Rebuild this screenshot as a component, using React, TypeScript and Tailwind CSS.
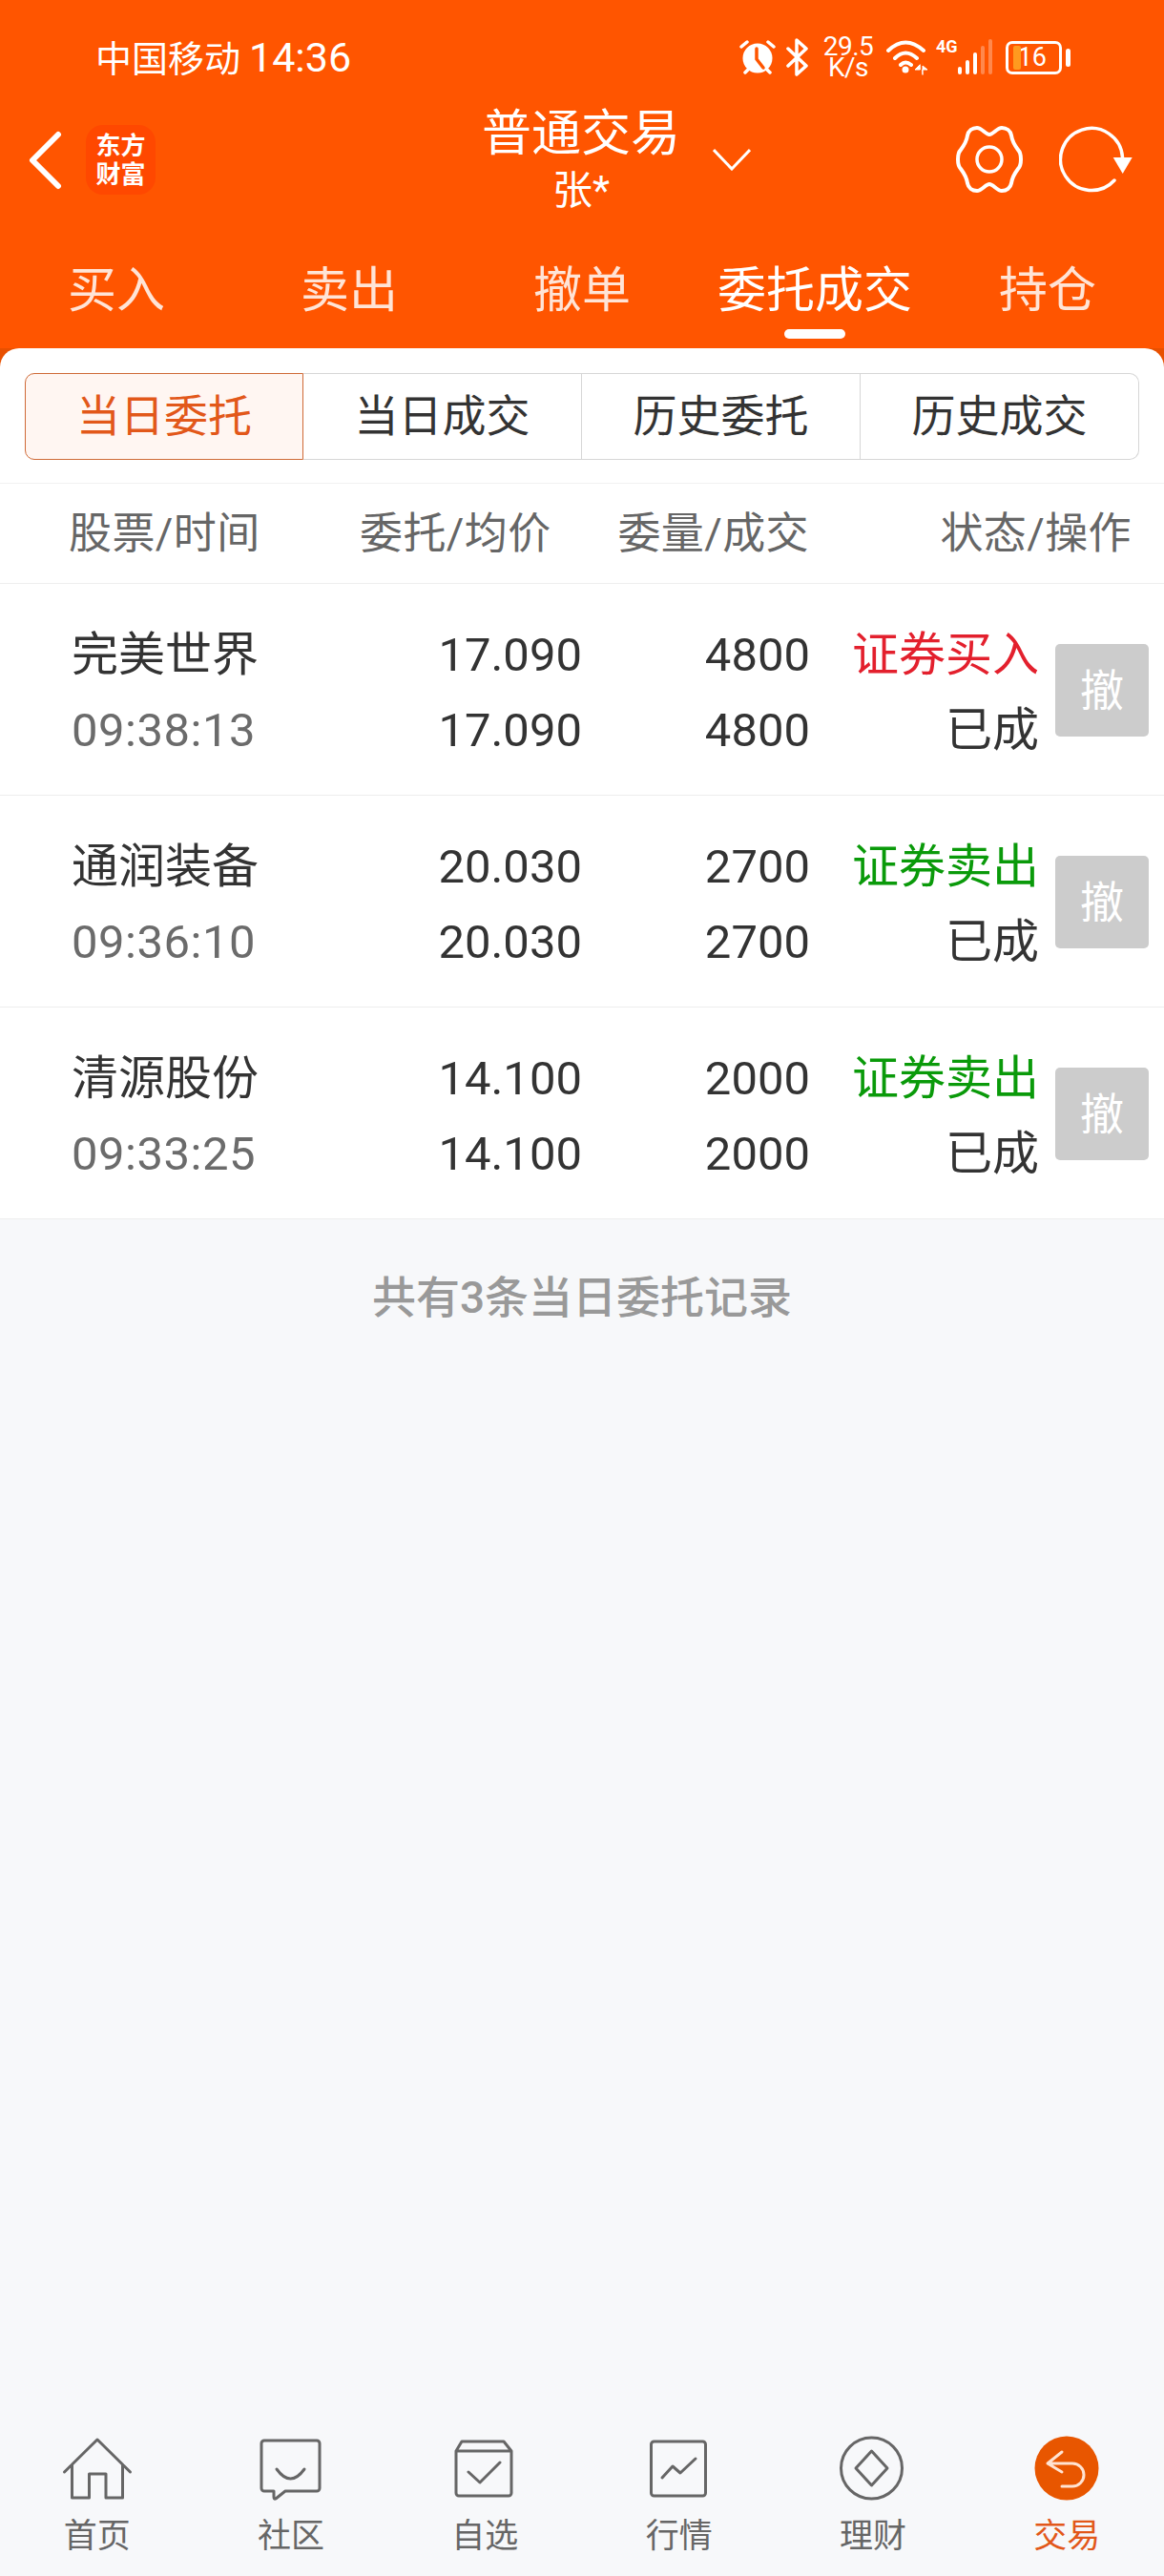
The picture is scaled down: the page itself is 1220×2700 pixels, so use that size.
const tabs = ['买入', '卖出', '撤单', '委托成交', '持仓']
const segments = ['当日委托', '当日成交', '历史委托', '历史成交']

const orders = [
  { name: '完美世界', time: '09:38:13', price: '17.090', qty: '4800', side: '证券买入', buy: true },
  { name: '通润装备', time: '09:36:10', price: '20.030', qty: '2700', side: '证券卖出', buy: false },
  { name: '清源股份', time: '09:33:25', price: '14.100', qty: '2000', side: '证券卖出', buy: false },
]

function NavIcon({ children }: { children: React.ReactNode }) {
  return (
    <svg width="80" height="70" viewBox="0 0 80 70" fill="none" stroke="#666666" strokeWidth="3" strokeLinejoin="round" strokeLinecap="round">
      {children}
    </svg>
  )
}

const navItems = [
  {
    label: '首页',
    icon: <path d="M5.5 39L40 5L74.5 39M13.5 31V66H31.5V41H49V66H66.5V31" />,
  },
  {
    label: '社区',
    icon: (
      <>
        <path d="M12 6H67a3 3 0 0 1 3 3V56a3 3 0 0 1-3 3H34L24 67Q22 68 22 65V59H12a3 3 0 0 1-3-3V9a3 3 0 0 1 3-3Z" />
        <path d="M25 36Q39.5 56 54 36" />
      </>
    ),
  },
  {
    label: '自选',
    icon: (
      <>
        <path d="M16 7H60L68 17V61a3 3 0 0 1-3 3H13a3 3 0 0 1-3-3V17ZM10 17H68" />
        <path d="M23 39L35 50L56 29" />
      </>
    ),
  },
  {
    label: '行情',
    icon: (
      <>
        <rect x="10.5" y="7" width="57" height="57" rx="3" />
        <path d="M22 45L33 33L41 40L57 25" />
      </>
    ),
  },
  {
    label: '理财',
    icon: (
      <>
        <circle cx="38.5" cy="35" r="32" />
        <path d="M38.5 17L55 35L38.5 53L22 35Z" />
      </>
    ),
  },
  {
    label: '交易',
    active: true,
    icon: (
      <>
        <circle cx="40" cy="35" r="33.5" fill="#e85600" stroke="none" />
        <path d="M35 18L20 30L35 39M20 30H46a12 12 0 0 1 0 24H35" stroke="#ffe3d2" />
      </>
    ),
  },
]

function StatusIcons() {
  return (
    <div className="flex items-center text-white">
      <svg width="40" height="40" viewBox="0 0 40 40" fill="none" stroke="white" strokeLinecap="round">
        <circle cx="19" cy="21" r="15.5" fill="white" stroke="none" />
        <path d="M18 11V22L25 31" stroke="#ff5500" strokeWidth="3.5" />
        <path d="M2 9L8 4M36 9L30 4M6 36L9 33M32 36L29 33" strokeWidth="3.5" />
      </svg>
      <svg className="ml-[9px]" width="24" height="40" viewBox="0 0 24 40" fill="none" stroke="white" strokeWidth="3.5" strokeLinecap="round" strokeLinejoin="round">
        <path d="M2 11L21 29L11 38V2L21 11L2 29" />
      </svg>
      <div className="ml-[15px] flex w-[52px] flex-col items-center text-[28px] leading-[22px] tracking-[-0.5px]">
        <span>29.5</span>
        <span>K/s</span>
      </div>
      <svg className="ml-[14px]" width="44" height="38" viewBox="0 0 44 38" fill="none" stroke="white" strokeWidth="4" strokeLinecap="round">
        <path d="M2 12Q20 -5 39 12M9 20Q20 9 32 20M15 27Q20 22 26 27" />
        <circle cx="20" cy="32" r="3.5" fill="white" stroke="none" />
        <path d="M35 27L30 32H35ZM38 37V28L43 32H38Z" fill="white" strokeWidth="1" />
      </svg>
      <div className="ml-[8px] h-[38px] w-[22px] self-start pt-[2px] text-[18px] leading-[18px] font-bold">4G</div>
      <svg width="38" height="38" viewBox="0 0 38 38" fill="white">
        <rect x="1" y="29" width="4" height="8" rx="2" />
        <rect x="9" y="22" width="4" height="15" rx="2" />
        <rect x="17" y="14" width="4" height="23" rx="2" />
        <rect x="25" y="7" width="4" height="30" rx="2" fillOpacity="0.3" />
        <rect x="33" y="0" width="4" height="37" rx="2" fillOpacity="0.3" />
      </svg>
      <div className="relative ml-[13px] flex h-[35px] w-[59px] items-center justify-end rounded-[7px] border-[3px] border-white pr-[13px] text-[27px] leading-none">
        <span className="absolute top-[2px] left-[5px] h-[25px] w-[8px] rounded-[2px] bg-[#ff9a1f]" />
        16
      </div>
      <span className="ml-[4px] h-[19px] w-[5px] rounded-full bg-white" />
    </div>
  )
}

export default function App() {
  return (
    <div className="flex h-[2700px] w-[1220px] flex-col bg-[#f7f8fa] font-[Roboto,'Noto_Sans_CJK_SC',sans-serif]">
      {/* Orange top */}
      <div className="bg-[#ff5500] text-white">
        <div className="flex h-[120px] items-center justify-between pr-[98px] pl-[100px]">
          <div className="flex items-baseline gap-[9px] leading-none">
            <span className="text-[38px]">中国移动</span>
            <span className="text-[43px]">14:36</span>
          </div>
          <StatusIcons />
        </div>

        <div className="relative flex h-[95px] items-center pl-[29px]">
          <svg width="36" height="62" viewBox="0 0 36 62" fill="none" stroke="white" strokeWidth="6" strokeLinecap="round" strokeLinejoin="round">
            <path d="M32 4L5 31L32 58" />
          </svg>
          <div className="ml-[25px] flex h-[73px] w-[73px] flex-col items-center justify-center rounded-[18px] bg-[#ff4800] text-[26px] leading-[30px] font-bold">
            <span>东方</span>
            <span>财富</span>
          </div>

          <div className="absolute top-[-7px] left-[505px] flex w-[208px] flex-col items-center">
            <span className="text-[52px] leading-[56px]">普通交易</span>
            <span className="mt-[8px] text-[42px] leading-[46px]">张*</span>
          </div>
          <svg className="absolute top-[35px] left-[747px]" width="40" height="24" viewBox="0 0 40 24" fill="none" stroke="white" strokeWidth="3">
            <path d="M1 2L20 22L39 2" />
          </svg>
          <svg className="absolute top-[9px] left-[998px]" width="78" height="76" viewBox="-39 -38 78 76" fill="none" stroke="white" strokeWidth="4">
            <path d="M0-26C4-26 8-33 13-33C18-33 22-30 23-25C24-18 27-14 30-10C33-7 33-3 33 0C33 3 33 7 30 10C27 14 24 18 23 25C22 30 18 33 13 33C8 33 4 26 0 26C-4 26-8 33-13 33C-18 33-22 30-23 25C-24 18-27 14-30 10C-33 7-33 3-33 0C-33-3-33-7-30-10C-27-14-24-18-23-25C-22-30-18-33-13-33C-8-33-4-26 0-26Z" />
            <circle r="13" strokeWidth="3.5" />
          </svg>
          <svg className="absolute top-[11px] left-[1110px]" width="80" height="74" viewBox="0 0 80 74" fill="none" stroke="white" strokeWidth="3.5" strokeLinecap="round">
            <path d="M58 58A32.5 32.5 0 1 1 66.5 34" />
            <path d="M56.7 34H76.7L66.7 51Z" fill="white" stroke="none" />
          </svg>
        </div>

        <div className="grid h-[150px] grid-cols-5 pt-[54px]">
          {tabs.map((t) => (
            <div key={t} className="relative flex justify-center">
              <span className={`text-[51px] leading-[72px] ${t === '委托成交' ? 'text-white' : 'text-[#ffe4d6]'}`}>{t}</span>
              {t === '委托成交' && <span className="absolute top-[76px] h-[10px] w-[64px] rounded-full bg-white" />}
            </div>
          ))}
        </div>
      </div>

      {/* Card */}
      <div className="bg-[#e85000]">
        <div className="rounded-t-[20px] bg-white">
          <div className="flex h-[142px] border-b border-[#f1f1f1] pt-[26px] pl-[26px]">
            {segments.map((s, i) => (
              <div
                key={s}
                className={`flex h-[91px] w-[292px] items-center justify-center border text-[46px] ${i === 0 ? 'rounded-l-[10px] border-[#cf6a37] bg-[#fff6f2] text-[#e2581a]' : 'border-l-0 border-[#d6d6d6] text-[#333333]'} ${i === 3 ? 'rounded-r-[10px]' : ''}`}
              >
                {s}
              </div>
            ))}
          </div>
          <div className="flex h-[105px] items-center border-b border-[#eeeeee] pt-[2px] text-[45px] tracking-[0.4px] whitespace-nowrap text-[#666666]">
            <span className="w-[377px] pl-[72px]">股票/时间</span>
            <span className="w-[200px]">委托/均价</span>
            <span className="w-[271px] text-right">委量/成交</span>
            <span className="w-[338px] text-right">状态/操作</span>
          </div>
        </div>
      </div>

      <div className="bg-white">
        {orders.map((o) => (
          <div key={o.name} className="flex h-[222px] border-b border-[#eeeeee] pt-[35px] text-[49px] leading-[79px] text-[#333333]">
            <div className="w-[420px] pl-[75px]">
              <div>{o.name}</div>
              <div className="text-[#6b6b6b] tracking-[0.5px]">{o.time}</div>
            </div>
            <div className="w-[190px] text-right">
              <div>{o.price}</div>
              <div>{o.price}</div>
            </div>
            <div className="w-[239px] text-right">
              <div>{o.qty}</div>
              <div>{o.qty}</div>
            </div>
            <div className="w-[240px] text-right">
              <div className={o.buy ? 'text-[#e3202d]' : 'text-[#0a9a0a]'}>{o.side}</div>
              <div>已成</div>
            </div>
            <div className="mt-[28px] ml-[17px] flex h-[97px] w-[98px] items-center justify-center rounded-[5px] bg-[#cccccc] text-[46px] leading-none text-white">
              撤
            </div>
          </div>
        ))}
      </div>

      <div className="flex-1 pt-[55px] text-center text-[46px] leading-[54px] font-medium text-[#999999]">共有3条当日委托记录</div>

      {/* Bottom nav */}
      <div className="grid h-[148px] grid-cols-6">
        {navItems.map((n) => (
          <div key={n.label} className="flex flex-col items-center">
            <NavIcon>{n.icon}</NavIcon>
            <span className={`mt-[17px] text-[35px] leading-[40px] ${n.active ? 'text-[#e2581a]' : 'text-[#666666]'}`}>{n.label}</span>
          </div>
        ))}
      </div>
    </div>
  )
}
